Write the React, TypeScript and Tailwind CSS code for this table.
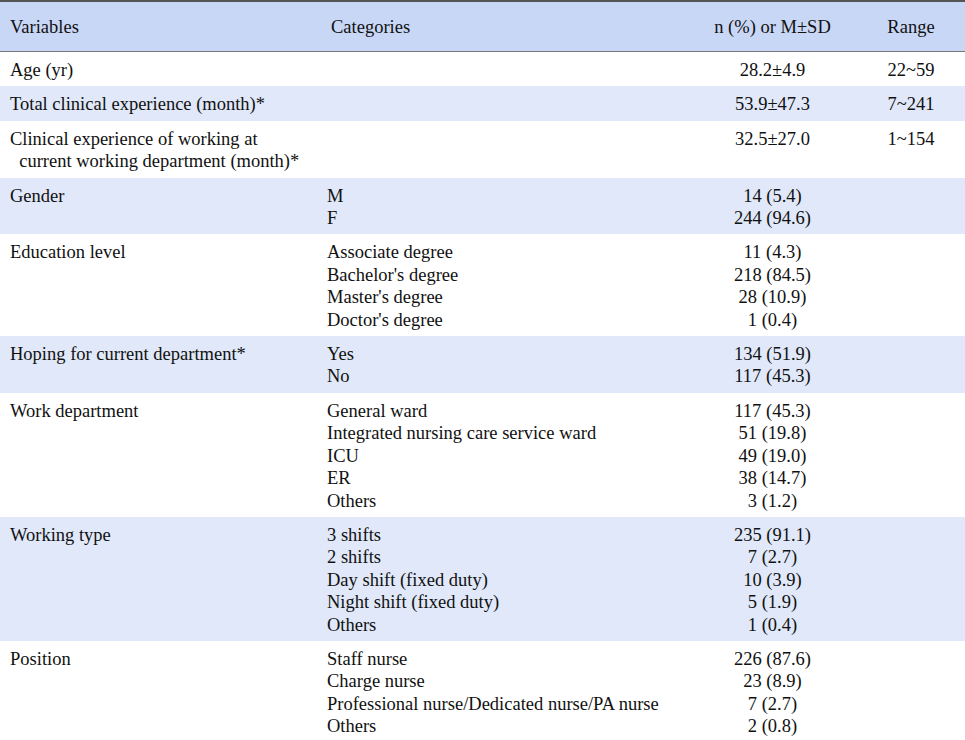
type Row = {
  variable: string[];
  categories: string[];
  values: string[];
  range?: string;
  shaded?: boolean;
};

const rows: Row[] = [
  { variable: ["Age (yr)"], categories: [], values: ["28.2±4.9"], range: "22~59" },
  { variable: ["Total clinical experience (month)*"], categories: [], values: ["53.9±47.3"], range: "7~241", shaded: true },
  {
    variable: ["Clinical experience of working at", "\u00a0\u00a0current working department (month)*"],
    categories: [],
    values: ["32.5±27.0"],
    range: "1~154",
  },
  { variable: ["Gender"], categories: ["M", "F"], values: ["14 (5.4)", "244 (94.6)"], shaded: true },
  {
    variable: ["Education level"],
    categories: ["Associate degree", "Bachelor's degree", "Master's degree", "Doctor's degree"],
    values: ["11 (4.3)", "218 (84.5)", "28 (10.9)", "1 (0.4)"],
  },
  { variable: ["Hoping for current department*"], categories: ["Yes", "No"], values: ["134 (51.9)", "117 (45.3)"], shaded: true },
  {
    variable: ["Work department"],
    categories: ["General ward", "Integrated nursing care service ward", "ICU", "ER", "Others"],
    values: ["117 (45.3)", "51 (19.8)", "49 (19.0)", "38 (14.7)", "3 (1.2)"],
  },
  {
    variable: ["Working type"],
    categories: ["3 shifts", "2 shifts", "Day shift (fixed duty)", "Night shift (fixed duty)", "Others"],
    values: ["235 (91.1)", "7 (2.7)", "10 (3.9)", "5 (1.9)", "1 (0.4)"],
    shaded: true,
  },
  {
    variable: ["Position"],
    categories: ["Staff nurse", "Charge nurse", "Professional nurse/Dedicated nurse/PA nurse", "Others"],
    values: ["226 (87.6)", "23 (8.9)", "7 (2.7)", "2 (0.8)"],
  },
];

export default function App() {
  return (
    <div className="w-[965px] h-[740px] bg-white text-[#111] font-['Liberation_Serif',serif] text-[18.5px] leading-[22.4px]">
      <div className="border-t-2 border-[#555] border-b border-b-[#777] bg-[#c9d7f6] grid grid-cols-[327px_373px_145px_120px] items-center h-[52px] pt-[2px]">
        <div className="pl-[10px]">Variables</div>
        <div className="pl-[4px]">Categories</div>
        <div className="text-center">n (%) or M±SD</div>
        <div className="text-center pl-[12px]">Range</div>
      </div>
      {rows.map((row, i) => (
        <div
          key={i}
          className={`grid grid-cols-[327px_373px_145px_120px] pt-[7px] pb-[5px] ${row.shaded ? "bg-[#e0e8f9]" : "bg-white"}`}
        >
          <div className="pl-[10px] whitespace-pre">
            {row.variable.map((v, j) => (
              <div key={j}>{v}</div>
            ))}
          </div>
          <div>
            {row.categories.map((c, j) => (
              <div key={j}>{c}</div>
            ))}
          </div>
          <div className="text-center">
            {row.values.map((v, j) => (
              <div key={j}>{v}</div>
            ))}
          </div>
          <div className="text-center pl-[12px]">{row.range}</div>
        </div>
      ))}
      <div className="border-t-2 border-[#555]" />
    </div>
  );
}
